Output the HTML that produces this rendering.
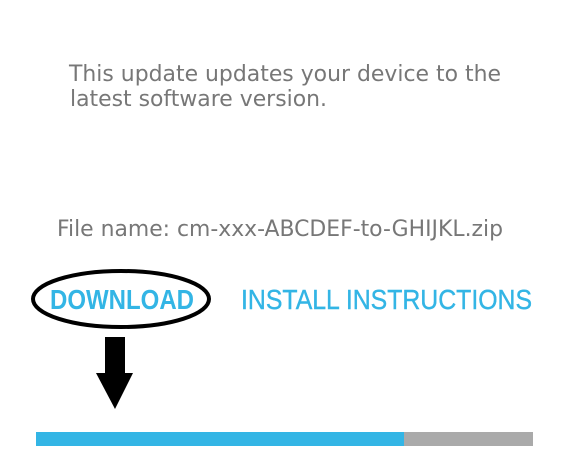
<!DOCTYPE html>
<html><head><style>html,body{margin:0;padding:0;background:#fff;}svg{display:block}</style></head>
<body>
<svg width="570" height="461" viewBox="0 0 570 461" xmlns="http://www.w3.org/2000/svg">
<rect width="570" height="461" fill="#fff"/>
<g font-family="DejaVu Sans, sans-serif" font-size="22" fill="#777">
<text x="69" y="81" textLength="432" lengthAdjust="spacingAndGlyphs">This update updates your device to the</text>
<text x="70" y="106" textLength="257" lengthAdjust="spacingAndGlyphs">latest software version.</text>
<text x="57" y="236" textLength="446" lengthAdjust="spacingAndGlyphs">File name: cm-xxx-ABCDEF-to-GHIJKL.zip</text>
</g>
<g font-family="Liberation Sans, sans-serif" font-size="28" fill="#33b5e5">
<text x="50" y="309" font-weight="bold" textLength="144" lengthAdjust="spacingAndGlyphs">DOWNLOAD</text>
<text x="241" y="309" stroke="#33b5e5" stroke-width="0.4" textLength="291" lengthAdjust="spacingAndGlyphs">INSTALL INSTRUCTIONS</text>
</g>
<ellipse cx="121" cy="299" rx="88" ry="28" fill="none" stroke="#000" stroke-width="4"/>
<rect x="105" y="337" width="20" height="36" fill="#000"/>
<polygon points="96,373 133,373 115,409" fill="#000"/>
<rect x="36" y="432" width="368" height="14" fill="#33b5e5"/>
<rect x="404" y="432" width="129" height="14" fill="#aaa"/>
</svg>
</body></html>
